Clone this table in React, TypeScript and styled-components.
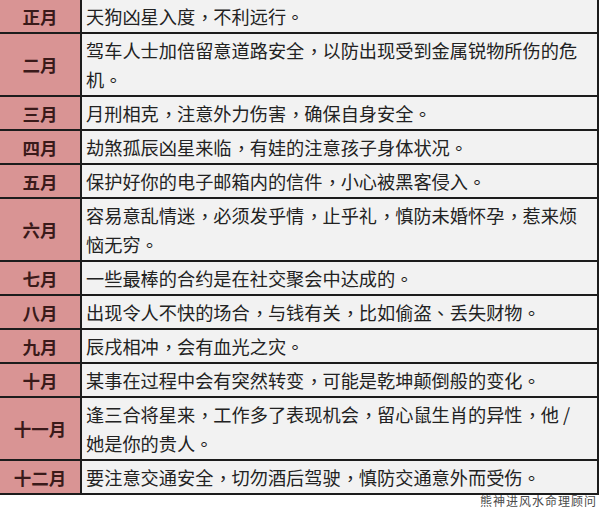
import React from 'react';
import styled, { createGlobalStyle } from 'styled-components';

interface MonthRow {
  month: string;
  lines: string[];
}

const rows: MonthRow[] = [
  { month: '正月', lines: ['天狗凶星入度，不利远行。'] },
  { month: '二月', lines: ['驾车人士加倍留意道路安全，以防出现受到金属锐物所伤的危', '机。'] },
  { month: '三月', lines: ['月刑相克，注意外力伤害，确保自身安全。'] },
  { month: '四月', lines: ['劫煞孤辰凶星来临，有娃的注意孩子身体状况。'] },
  { month: '五月', lines: ['保护好你的电子邮箱内的信件，小心被黑客侵入。'] },
  { month: '六月', lines: ['容易意乱情迷，必须发乎情，止乎礼，慎防未婚怀孕，惹来烦', '恼无穷。'] },
  { month: '七月', lines: ['一些最棒的合约是在社交聚会中达成的。'] },
  { month: '八月', lines: ['出现令人不快的场合，与钱有关，比如偷盗、丢失财物。'] },
  { month: '九月', lines: ['辰戌相冲，会有血光之灾。'] },
  { month: '十月', lines: ['某事在过程中会有突然转变，可能是乾坤颠倒般的变化。'] },
  { month: '十一月', lines: ['逢三合将星来，工作多了表现机会，留心鼠生肖的异性，他 /', '她是你的贵人。'] },
  { month: '十二月', lines: ['要注意交通安全，切勿酒后驾驶，慎防交通意外而受伤。'] },
];

const GlobalStyle = createGlobalStyle`
  html, body {
    margin: 0;
    padding: 0;
    background: #ffffff;
  }
`;

const Page = styled.div`
  width: 600px;
  height: 508px;
  overflow: hidden;
  display: flex;
  flex-direction: column;
`;

const Table = styled.div`
  width: 599px;
  display: flex;
  flex-direction: column;
`;

const Row = styled.div`
  display: grid;
  grid-template-columns: 82px 1fr;
  border-bottom: 2px solid #1c1c1c;
`;

const MonthCell = styled.div`
  background: #d99494;
  border-right: 2px solid #1c1c1c;
  display: flex;
  align-items: center;
  justify-content: center;
  font-family: 'Noto Sans CJK SC', sans-serif;
  font-weight: 700;
  font-size: 17.5px;
  color: #3a1a1a;
`;

const TextCell = styled.div`
  background: #f2f2f2;
  border-right: 2px solid #1c1c1c;
  padding: 2px 4px 1px 4px;
  font-family: 'Noto Sans CJK SC', sans-serif;
  font-size: 18.2px;
  line-height: 29px;
  color: #222222;
  white-space: nowrap;
`;

const Line = styled.div`
  height: 29px;
`;

// centred punctuation, as in the reference's font
const Punct = styled.span`
  display: inline-block;
  width: 1em;
  line-height: 1em;
  padding-left: 0.3em;
  letter-spacing: -0.3em;
  box-sizing: border-box;
  vertical-align: 0.28em;
`;

const Watermark = styled.div`
  align-self: flex-end;
  margin-right: 3px;
  margin-top: -1px;
  font-family: 'Noto Sans CJK SC', serif;
  font-size: 12px;
  letter-spacing: 1px;
  line-height: 13px;
  color: #4a4a4a;
`;

const renderLine = (line: string) =>
  line.split(/([，。、])/).map((part, i) =>
    /^[，。、]$/.test(part) ? <Punct key={i}>{part}</Punct> : part
  );

const App: React.FC = () => {
  return (
    <Page>
      <GlobalStyle />
      <Table>
        {rows.map((row) => (
          <Row key={row.month}>
            <MonthCell>{row.month}</MonthCell>
            <TextCell>
              {row.lines.map((line, i) => (
                <Line key={i}>{renderLine(line)}</Line>
              ))}
            </TextCell>
          </Row>
        ))}
      </Table>
      <Watermark>熊神进风水命理顾问</Watermark>
    </Page>
  );
};

export default App;
